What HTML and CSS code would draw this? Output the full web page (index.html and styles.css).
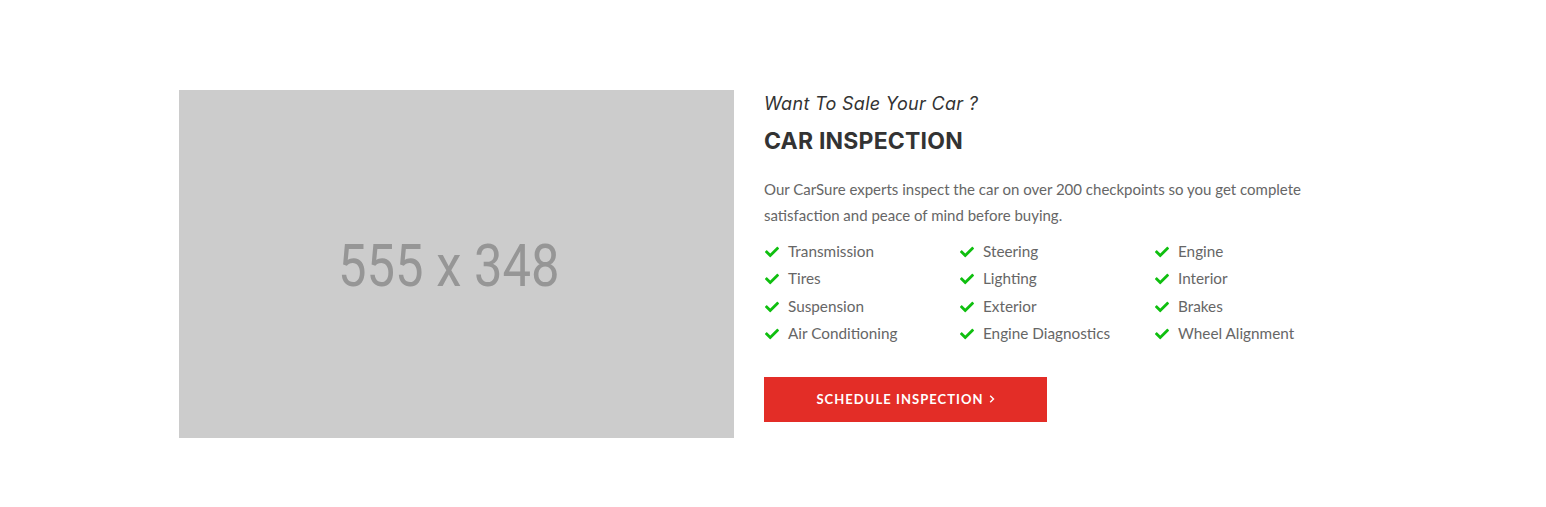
FILE: index.html
```html
<!DOCTYPE html>
<html>
<head>
<meta charset="utf-8">
<link rel="stylesheet" href="styles.css">
</head>
<body>
<section class="inspection">
  <div class="photo"><span>555 x 348</span></div>
  <div class="content">
    <p class="kicker">Want To Sale Your Car ?</p>
    <h2 class="title">CAR INSPECTION</h2>
    <p class="desc">Our CarSure experts inspect the car on over 200 checkpoints so you get complete satisfaction and peace of mind before buying.</p>
    <ul class="checks">
      <li><svg viewBox="0 0 512 512"><path d="M173.9 439.4l-166.4-166.4c-10-10-10-26.2 0-36.2l36.2-36.2c10-10 26.2-10 36.2 0L192 312.7 432.1 72.6c10-10 26.2-10 36.2 0l36.2 36.2c10 10 10 26.2 0 36.2l-294.4 294.4c-10 10-26.2 10-36.2 0z"/></svg>Transmission</li>
      <li><svg viewBox="0 0 512 512"><path d="M173.9 439.4l-166.4-166.4c-10-10-10-26.2 0-36.2l36.2-36.2c10-10 26.2-10 36.2 0L192 312.7 432.1 72.6c10-10 26.2-10 36.2 0l36.2 36.2c10 10 10 26.2 0 36.2l-294.4 294.4c-10 10-26.2 10-36.2 0z"/></svg>Steering</li>
      <li><svg viewBox="0 0 512 512"><path d="M173.9 439.4l-166.4-166.4c-10-10-10-26.2 0-36.2l36.2-36.2c10-10 26.2-10 36.2 0L192 312.7 432.1 72.6c10-10 26.2-10 36.2 0l36.2 36.2c10 10 10 26.2 0 36.2l-294.4 294.4c-10 10-26.2 10-36.2 0z"/></svg>Engine</li>
      <li><svg viewBox="0 0 512 512"><path d="M173.9 439.4l-166.4-166.4c-10-10-10-26.2 0-36.2l36.2-36.2c10-10 26.2-10 36.2 0L192 312.7 432.1 72.6c10-10 26.2-10 36.2 0l36.2 36.2c10 10 10 26.2 0 36.2l-294.4 294.4c-10 10-26.2 10-36.2 0z"/></svg>Tires</li>
      <li><svg viewBox="0 0 512 512"><path d="M173.9 439.4l-166.4-166.4c-10-10-10-26.2 0-36.2l36.2-36.2c10-10 26.2-10 36.2 0L192 312.7 432.1 72.6c10-10 26.2-10 36.2 0l36.2 36.2c10 10 10 26.2 0 36.2l-294.4 294.4c-10 10-26.2 10-36.2 0z"/></svg>Lighting</li>
      <li><svg viewBox="0 0 512 512"><path d="M173.9 439.4l-166.4-166.4c-10-10-10-26.2 0-36.2l36.2-36.2c10-10 26.2-10 36.2 0L192 312.7 432.1 72.6c10-10 26.2-10 36.2 0l36.2 36.2c10 10 10 26.2 0 36.2l-294.4 294.4c-10 10-26.2 10-36.2 0z"/></svg>Interior</li>
      <li><svg viewBox="0 0 512 512"><path d="M173.9 439.4l-166.4-166.4c-10-10-10-26.2 0-36.2l36.2-36.2c10-10 26.2-10 36.2 0L192 312.7 432.1 72.6c10-10 26.2-10 36.2 0l36.2 36.2c10 10 10 26.2 0 36.2l-294.4 294.4c-10 10-26.2 10-36.2 0z"/></svg>Suspension</li>
      <li><svg viewBox="0 0 512 512"><path d="M173.9 439.4l-166.4-166.4c-10-10-10-26.2 0-36.2l36.2-36.2c10-10 26.2-10 36.2 0L192 312.7 432.1 72.6c10-10 26.2-10 36.2 0l36.2 36.2c10 10 10 26.2 0 36.2l-294.4 294.4c-10 10-26.2 10-36.2 0z"/></svg>Exterior</li>
      <li><svg viewBox="0 0 512 512"><path d="M173.9 439.4l-166.4-166.4c-10-10-10-26.2 0-36.2l36.2-36.2c10-10 26.2-10 36.2 0L192 312.7 432.1 72.6c10-10 26.2-10 36.2 0l36.2 36.2c10 10 10 26.2 0 36.2l-294.4 294.4c-10 10-26.2 10-36.2 0z"/></svg>Brakes</li>
      <li><svg viewBox="0 0 512 512"><path d="M173.9 439.4l-166.4-166.4c-10-10-10-26.2 0-36.2l36.2-36.2c10-10 26.2-10 36.2 0L192 312.7 432.1 72.6c10-10 26.2-10 36.2 0l36.2 36.2c10 10 10 26.2 0 36.2l-294.4 294.4c-10 10-26.2 10-36.2 0z"/></svg>Air Conditioning</li>
      <li><svg viewBox="0 0 512 512"><path d="M173.9 439.4l-166.4-166.4c-10-10-10-26.2 0-36.2l36.2-36.2c10-10 26.2-10 36.2 0L192 312.7 432.1 72.6c10-10 26.2-10 36.2 0l36.2 36.2c10 10 10 26.2 0 36.2l-294.4 294.4c-10 10-26.2 10-36.2 0z"/></svg>Engine Diagnostics</li>
      <li><svg viewBox="0 0 512 512"><path d="M173.9 439.4l-166.4-166.4c-10-10-10-26.2 0-36.2l36.2-36.2c10-10 26.2-10 36.2 0L192 312.7 432.1 72.6c10-10 26.2-10 36.2 0l36.2 36.2c10 10 10 26.2 0 36.2l-294.4 294.4c-10 10-26.2 10-36.2 0z"/></svg>Wheel Alignment</li>
    </ul>
    <a class="btn" href="#">SCHEDULE INSPECTION <svg class="chev" viewBox="0 0 10 16"><path d="M2 2.5l5.5 5.5L2 13.5" fill="none" stroke="#fff" stroke-width="2.4"/></svg></a>
  </div>
</section>
</body>
</html>
```

FILE: styles.css
```css
html, body {
  margin: 0;
  padding: 0;
  background: #fff;
}
.inspection {
  display: flex;
  gap: 30px;
  padding: 90px 0 0 179px;
  align-items: flex-start;
}
.photo {
  width: 555px;
  height: 348px;
  background: #cccccc;
  display: flex;
  align-items: center;
  justify-content: center;
  flex: none;
}
.photo span {
  font-family: Roboto, "Liberation Sans", sans-serif;
  font-size: 59px;
  color: #969696;
  transform: scaleX(0.86);
  margin: 2px 16px 0 0;
}
.content {
  width: 555px;
}
.kicker {
  margin: 0;
  padding-top: 2px;
  font-family: Inter, "Open Sans", sans-serif;
  font-style: italic;
  font-size: 18px;
  line-height: 24px;
  color: #333;
  letter-spacing: 0.3px;
}
.title {
  margin: 10px 0 0;
  font-family: Inter, "Open Sans", sans-serif;
  font-weight: 700;
  font-size: 23px;
  line-height: 30px;
  color: #333;
  letter-spacing: 0.2px;
}
.desc {
  margin: 20px 0 0;
  font-family: Lato, "Noto Sans", sans-serif;
  font-size: 15px;
  line-height: 26px;
  color: #666;
  max-width: 545px;
}
.checks {
  list-style: none;
  margin: 10px 0 0;
  padding: 0;
  display: grid;
  grid-template-columns: 195px 195px 165px;
  row-gap: 0;
}
.checks li {
  display: flex;
  align-items: center;
  font-family: Lato, "Noto Sans", sans-serif;
  font-size: 15.3px;
  line-height: 27.4px;
  color: #666;
}
.checks svg {
  width: 14px;
  height: 14px;
  fill: #0fbf0f;
  margin: 0 9px 0 1px;
  flex: none;
}
.btn {
  display: flex;
  align-items: center;
  justify-content: center;
  gap: 5px;
  margin-top: 29px;
  width: 283px;
  height: 45px;
  background: #e32d27;
  color: #fff;
  text-decoration: none;
  font-family: Lato, "Noto Sans", sans-serif;
  font-weight: 700;
  font-size: 13px;
  letter-spacing: 1.05px;
}
.chev {
  width: 6px;
  height: 10px;
}
```
